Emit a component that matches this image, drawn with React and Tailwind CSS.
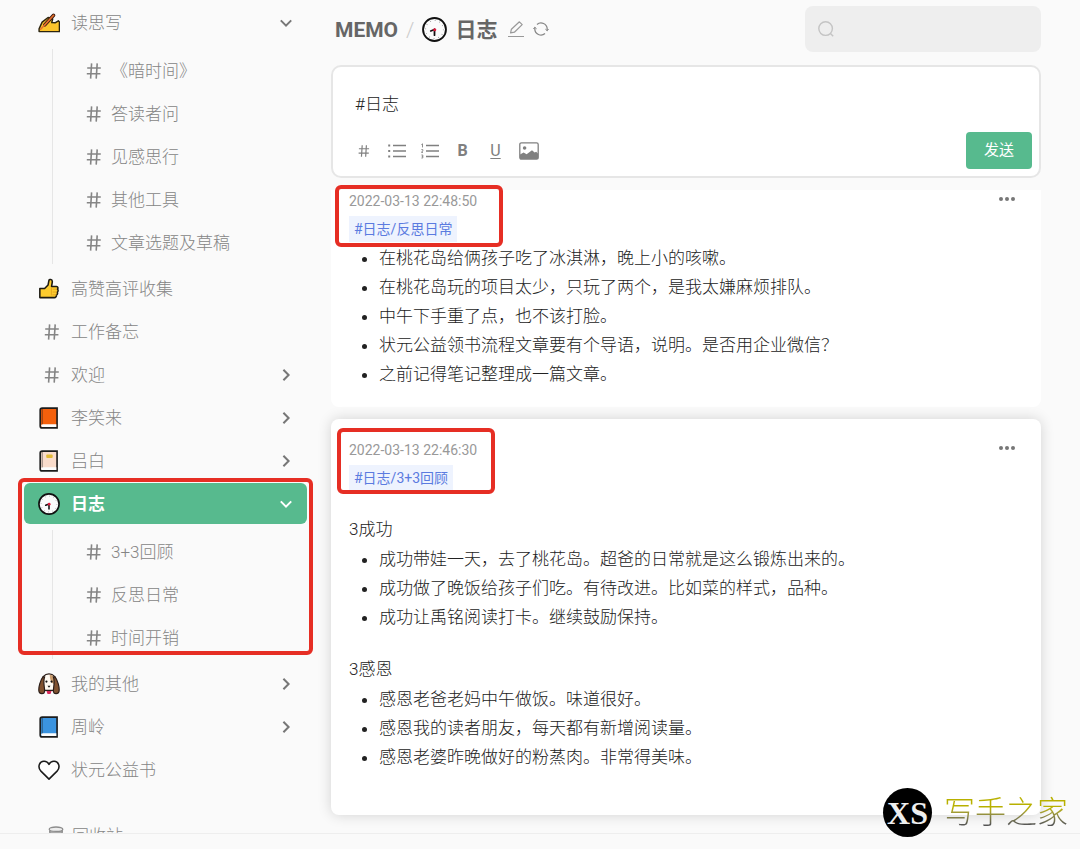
import { useState } from "react";
import clsx from "clsx";

const HashIcon = ({ className = "size-4" }) => (
  <svg viewBox="0 0 16 16" fill="none" stroke="currentColor" strokeWidth="1.6" className={className}>
    <path d="M5.6.4 4.6 15.6M11.2.4l-1 15.2M1.2 5h13.6M.8 10.8h13.6" />
  </svg>
);

const ChevronIcon = ({ open }) => (
  <svg
    viewBox="0 0 12 12"
    fill="none"
    stroke="currentColor"
    strokeWidth="2"
    className={clsx("size-3 shrink-0", !open && "-rotate-90")}
  >
    <path d="M.8 3.4 6 8.6l5.2-5.2" />
  </svg>
);

const ClockIcon = ({ className = "size-[22px]" }) => (
  <svg viewBox="0 0 24 24" className={className}>
    <circle cx="12" cy="12" r="11" fill="#fbfbfb" stroke="#111" strokeWidth="1.8" />
    <circle cx="12" cy="12" r="8.6" fill="none" stroke="#999" strokeWidth="1" strokeDasharray=".8 3.7" />
    <path d="M12 12v5.4" stroke="#111" strokeWidth="1.7" strokeLinecap="round" />
    <path d="m12 12-3.6 1.4" stroke="#111" strokeWidth="1.7" strokeLinecap="round" />
    <circle cx="12.2" cy="12.2" r="1.5" fill="#e0193c" />
  </svg>
);

const WritingIcon = () => (
  <svg viewBox="0 0 24 24" className="size-[22px]">
    <path
      d="M1.2 21.4v-3.2L4.5 11 11 6l5 1.6-1 4 3.6.2 3.600-2.200 1.200 1.200v10.600z"
      fill="#fcc42c"
      stroke="#2b2410"
      strokeWidth="1.6"
      strokeLinejoin="round"
    />
    <path d="M7.4 14 17 3.6" stroke="#3a1b12" strokeWidth="3.8" strokeLinecap="round" />
    <path d="M7.4 14 17 3.6" stroke="#e8702c" strokeWidth="1.8" strokeLinecap="round" />
    <path d="m2.4 19.4 5-5.4" stroke="#e8702c" strokeWidth="1.6" />
  </svg>
);

const ThumbIcon = () => (
  <svg viewBox="0 0 24 24" className="size-[22px]">
    <path
      d="M2 11.5h5.2L11 7.6l1-5.2c.3-1.3 3.4-1.2 3.6 1.2.1 2-.8 4.4-.8 5.6h5.4c1.8 0 2 2.4.9 3 1.3.8 1 2.8-.1 3.2.7 1 .3 2.6-.8 3 .2 1.4-.8 3-2.4 3H2z"
      fill="#fccb2e"
      stroke="#1c1a12"
      strokeWidth="1.7"
      strokeLinejoin="round"
    />
    <path d="M16 12.2h4.5M16 15.3h4.5M15.6 18.4h4.6M14.6 10v9" stroke="#e3a11c" strokeWidth="1" />
  </svg>
);

const BookIcon = ({ color, label }) => (
  <svg viewBox="0 0 24 24" className="size-[22px]">
    <path
      d="M4.6 1.2h16.2v21.6H4.6c-1.4 0-2.2-.8-2.2-2.2V3.4c0-1.4.8-2.2 2.2-2.2z"
      fill={color}
      stroke="#1c1c1c"
      strokeWidth="1.8"
    />
    <path d="M5 18.8h15v3H5c-2 0-2-3 0-3z" fill="#fdfdfd" />
    <path d="M4.6 2v17" stroke="#1c1c1c" strokeOpacity=".55" strokeWidth="1" />
    {label && <rect x="9" y="5" width="7" height="3.6" rx="1" fill="#e3b935" />}
  </svg>
);

const DogIcon = () => (
  <svg viewBox="0 0 24 24" className="size-[22px]">
    <path d="M6 3.6C9 0 15 0 18 3.6c1.4 2 1 12 .4 15.4H5.6C5 15.6 4.6 5.6 6 3.6z" fill="#fffaf2" stroke="#2a1d18" strokeWidth="1.4" />
    <path d="M12.8 1.8c4 0 5.6 3 5.2 10.2-3-.4-5-3.4-5.2-10.2z" fill="#c99b6c" />
    <path d="M5.6 4C2.4 8 .4 15.6 1 19.8c.6 3.4 5.6 3.6 6.2.4C7.6 16 5 10 7.2 4.4z" fill="#80512f" stroke="#2a1d18" strokeWidth="1.3" />
    <path d="M18.4 4c3.2 4 5.2 11.6 4.6 15.8-.6 3.4-5.6 3.6-6.2.4-.4-4.2 2.2-10.2 0-15.8z" fill="#80512f" stroke="#2a1d18" strokeWidth="1.3" />
    <circle cx="9.2" cy="9.4" r="1.2" fill="#111" />
    <circle cx="14.8" cy="9.4" r="1.2" fill="#111" />
    <path d="M10.4 13.8h3.2L12 16z" fill="#111" />
    <path d="M9.2 19.6h5.6L13.6 23h-3.2z" fill="#d9295a" />
  </svg>
);

const HeartIcon = () => (
  <svg viewBox="0 0 24 24" fill="#fff" stroke="#1b1b1b" strokeWidth="1.7" className="size-[22px]">
    <path d="M12 22 3.2 13.2C-.6 9.2 1 2.8 6.4 2.4 9 2.3 11 3.8 12 5.8c1-2 3-3.5 5.6-3.4 5.4.4 7 6.8 3.2 10.8z" strokeLinejoin="round" />
  </svg>
);

const TrashIcon = () => (
  <svg viewBox="0 0 16 20" fill="none" stroke="#8d8d8d" strokeWidth="1.3" className="h-5 w-4">
    <path d="M1.6 4.4 3.2 19h9.6l1.6-14.6" fill="#aaa" />
    <ellipse cx="8" cy="3.2" rx="6.8" ry="2.2" fill="#eee" />
  </svg>
);

const ListIcon = ({ ordered }) => (
  <svg viewBox="0 0 18 16" fill="none" stroke="currentColor" strokeWidth="1.3" className="h-4 w-[18px]">
    <path d="M5 2.5h13M5 8h13M5 13.5h13" />
    {ordered ? (
      <path d="M.4 1.6 1.5.8v3.6M.4 6.6h1.4v1.2L.4 9.4h1.6M.4 12h1.4v3H.4M.8 13.5h1" strokeWidth=".9" />
    ) : (
      <path d="M.2 2.5h2M.2 8h2M.2 13.5h2" strokeWidth="2" />
    )}
  </svg>
);

const ImageIcon = () => (
  <svg viewBox="0 0 20 18" className="h-[18px] w-5">
    <rect x=".8" y=".8" width="18.4" height="16.4" rx="1.6" fill="none" stroke="currentColor" strokeWidth="1.3" />
    <circle cx="5.6" cy="6" r="1.8" fill="currentColor" />
    <path d="M1 17v-4.6l3.6-2 3 1.8 5.4-4 2.6 2.4 1.6-.8 2 2V17z" fill="currentColor" />
  </svg>
);

const menu = [
  {
    name: "读思写",
    icon: <WritingIcon />,
    open: true,
    children: ["《暗时间》", "答读者问", "见感思行", "其他工具", "文章选题及草稿"],
  },
  { name: "高赞高评收集", icon: <ThumbIcon /> },
  { name: "工作备忘" },
  { name: "欢迎", more: true },
  { name: "李笑来", icon: <BookIcon color="#f4600c" />, more: true },
  { name: "吕白", icon: <BookIcon color="#fadccb" label />, more: true },
  {
    name: "日志",
    icon: <ClockIcon />,
    open: true,
    active: true,
    children: ["3+3回顾", "反思日常", "时间开销"],
  },
  { name: "我的其他", icon: <DogIcon />, more: true },
  { name: "周岭", icon: <BookIcon color="#3b94e0" />, more: true },
  { name: "状元公益书", icon: <HeartIcon /> },
];

const notes = [
  {
    time: "2022-03-13 22:48:50",
    tag: "#日志/反思日常",
    sections: [
      {
        items: [
          "在桃花岛给俩孩子吃了冰淇淋，晚上小的咳嗽。",
          "在桃花岛玩的项目太少，只玩了两个，是我太嫌麻烦排队。",
          "中午下手重了点，也不该打脸。",
          "状元公益领书流程文章要有个导语，说明。是否用企业微信？",
          "之前记得笔记整理成一篇文章。",
        ],
      },
    ],
  },
  {
    time: "2022-03-13 22:46:30",
    tag: "#日志/3+3回顾",
    raised: true,
    sections: [
      {
        title: "3成功",
        items: [
          "成功带娃一天，去了桃花岛。超爸的日常就是这么锻炼出来的。",
          "成功做了晚饭给孩子们吃。有待改进。比如菜的样式，品种。",
          "成功让禹铭阅读打卡。继续鼓励保持。",
        ],
      },
      {
        title: "3感恩",
        items: [
          "感恩老爸老妈中午做饭。味道很好。",
          "感恩我的读者朋友，每天都有新增阅读量。",
          "感恩老婆昨晚做好的粉蒸肉。非常得美味。",
        ],
      },
    ],
  },
];

const MenuItem = ({ item }) => (
  <li className="relative">
    <div className="py-px">
      <a
        href="#"
        className={clsx(
          "flex h-[41px] items-center rounded-md pr-[15px] pl-3.5",
          item.active && "bg-[#57ba8e] font-bold text-white"
        )}
      >
        <span className="mr-[11px] flex w-[22px] shrink-0 justify-center">
          {item.icon || <HashIcon className="ml-1.5 size-4 shrink-0" />}
        </span>
        <span className="flex-1 pt-0.5">{item.name}</span>
        {(item.open || item.more) && (
          <span className={item.active ? "text-white" : "text-[#777]"}>
            <ChevronIcon open={item.open} />
          </span>
        )}
      </a>
    </div>
    {item.children && (
      <ul className="mt-[5px] mb-[3px] ml-7 border-l border-[#e6e6e6] pl-[33px]">
        {item.children.map((child) => (
          <li key={child}>
            <a href="#" className="flex h-[43px] items-center gap-[9px]">
              <HashIcon />
              <span className="pt-0.5">{child}</span>
            </a>
          </li>
        ))}
      </ul>
    )}
    {item.active && (
      <div className="pointer-events-none absolute -inset-x-1.5 -top-1 bottom-1 rounded-md border-4 border-[#e62e24]" />
    )}
  </li>
);

const Sidebar = () => (
  <aside className="w-[307px] shrink-0 pl-6 text-[17px] font-light text-[#858585]">
    <ul className="pt-px">
      {menu.map((item) => (
        <MenuItem key={item.name} item={item} />
      ))}
    </ul>
    <a href="#" className="mt-6 flex h-[41px] items-center gap-2 pl-6">
      <TrashIcon />
      <span className="pt-0.5">回收站</span>
    </a>
  </aside>
);

const Header = () => (
  <header className="flex items-center justify-between pt-1.5">
    <div className="flex items-center text-[#666]">
      <h1 className="flex items-center text-[21px] font-bold">
        <span className="ml-1 pt-1">MEMO</span>
        <span className="mx-2 pt-1 font-light text-[#ccc]">/</span>
        <ClockIcon className="mr-2 size-[25px]" />
        <span className="pt-1">日志</span>
      </h1>
      <button aria-label="编辑" className="ml-2.5 text-[#999]">
        <svg viewBox="0 0 18 18" fill="none" stroke="currentColor" strokeWidth="1.2" className="size-[18px]">
          <path d="M1 16.5h16M3.6 12.8l.8-3.6 8-7.4 2.8 2.8-7.8 7.6z" strokeLinejoin="round" />
        </svg>
      </button>
      <button aria-label="刷新" className="ml-2 text-[#888]">
        <svg viewBox="0 0 16 16" fill="none" stroke="currentColor" strokeWidth="1.3" className="size-4">
          <path d="M4 3.4A6.200 6.200 0 0 1 14.200 8v1.600M12 12.600A6.200 6.200 0 0 1 1.800 8V6.400" />
          <path d="m12.400 8.200 1.800 1.600 1.400-1.800M.4 8l1.400-1.800 1.800 1.600" strokeWidth="1" />
        </svg>
      </button>
    </div>
    <label className="flex h-[46px] w-[236px] items-center rounded-lg bg-[#eee] px-3 text-[#c4c4c4]">
      <svg viewBox="0 0 18 18" fill="none" stroke="currentColor" strokeWidth="1.4" className="size-[18px] shrink-0">
        <circle cx="8.6" cy="8.6" r="6.8" />
        <path d="m13.4 13.4 2.8 2.8" />
      </svg>
      <input type="search" aria-label="搜索" className="ml-2 w-full min-w-0 bg-transparent text-sm outline-none" />
    </label>
  </header>
);

const Editor = () => {
  const [text, setText] = useState("#日志");

  return (
    <section className="mt-[13px] rounded-[10px] border-2 border-[#e6e6e6] bg-white p-[7px]">
      <textarea
        aria-label="内容"
        className="block h-[58px] w-full resize-none px-[15px] pt-[18px] text-[17px] font-light text-[#222] outline-none"
        value={text}
        onChange={(e) => setText(e.target.value)}
      />
      <div className="flex items-center justify-between">
        <div className="flex items-center pl-[7px] text-[#808080]">
          <button aria-label="标签" className="flex w-[33px] justify-center">
            <HashIcon className="size-3" />
          </button>
          <button aria-label="无序列表" className="flex w-[33px] justify-center">
            <ListIcon />
          </button>
          <button aria-label="有序列表" className="flex w-[33px] justify-center">
            <ListIcon ordered />
          </button>
          <button className="w-[33px] text-base leading-4 font-bold">B</button>
          <button className="w-[33px] text-base leading-4 underline underline-offset-2">U</button>
          <button aria-label="图片" className="flex w-[33px] justify-center">
            <ImageIcon />
          </button>
        </div>
        <button className="h-[37px] w-[66px] rounded-sm bg-[#57ba8e] text-[15px] text-white">
          发送
        </button>
      </div>
    </section>
  );
};

const Note = ({ note }) => (
  <article
    className={clsx(
      "flex items-start justify-between rounded-lg bg-white px-[18px] text-[17px] leading-[29px] font-light text-[#222]",
      note.raised ? "pt-[21px] pb-[43px] shadow-[0_0_14px_rgba(0,0,0,0.16)]" : "rounded-t-none pt-px pb-[18px]"
    )}
  >
    <div>
      <div className="relative">
        <p className="text-sm leading-5 font-normal text-[#999]">{note.time}</p>
        <a href="#" className="mt-[5px] inline-block bg-[#eef3fe] px-[5px] text-sm leading-[26px] font-normal text-[#5b7be0]">
          {note.tag}
        </a>
        <div
          className={clsx(
            "pointer-events-none absolute rounded-md border-4 border-[#e62e24]",
            note.raised ? "-top-3 -left-3 h-[66px] w-[158px]" : "-top-1.5 -left-3.5 h-[62px] w-[168px]"
          )}
        />
      </div>
      {note.sections.map((section, i) => (
        <section key={i}>
          {section.title && <h2 className="pt-[23px]">{section.title}</h2>}
          <ul className="list-disc pt-px pl-[30px]">
            {section.items.map((line) => (
              <li key={line}>{line}</li>
            ))}
          </ul>
        </section>
      ))}
    </div>
    <button aria-label="更多" className="mr-2 flex h-4 items-center gap-0.5">
      <span className="size-1 rounded-full bg-[#777]" />
      <span className="size-1 rounded-full bg-[#777]" />
      <span className="size-1 rounded-full bg-[#777]" />
    </button>
  </article>
);

const Watermark = () => (
  <div className="pointer-events-none absolute right-3 bottom-3 flex items-center gap-3">
    <span className="flex size-[49px] items-center justify-center rounded-full bg-black font-['Liberation_Serif',serif] text-[32px] font-bold text-[#eee]">
      XS
    </span>
    <span className="bg-linear-to-b from-[#b8b000] from-40% to-[#555] to-80% bg-clip-text text-[31px] leading-10 font-light text-transparent">
      写手之家
    </span>
  </div>
);

const App = () => {
  return (
    <div className="relative flex h-screen flex-col overflow-hidden bg-[#fafafa] font-[Roboto,'Noto_Sans_CJK_SC',sans-serif]">
      <div className="flex min-h-0 flex-1 overflow-hidden">
        <Sidebar />
        <main className="min-w-0 flex-1 pr-[39px] pl-6">
          <Header />
          <Editor />
          <div className="mt-3 flex flex-col gap-3">
            {notes.map((note) => (
              <Note key={note.time} note={note} />
            ))}
          </div>
        </main>
      </div>
      <footer className="h-4 shrink-0 border-t border-[#eee]" />
      <Watermark />
    </div>
  );
};

export default App;
